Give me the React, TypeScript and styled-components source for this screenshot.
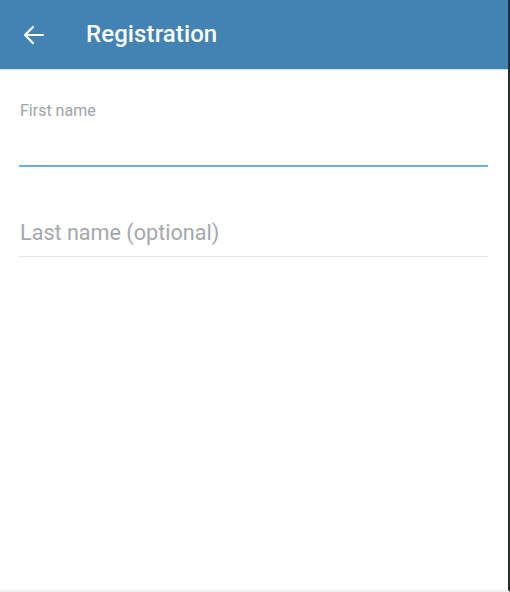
import { useState } from "react";
import styled, { createGlobalStyle } from "styled-components";

const GlobalStyle = createGlobalStyle`
  html, body {
    margin: 0;
    padding: 0;
    background: #ffffff;
    font-family: Roboto, "Noto Sans", Arial, sans-serif;
  }
`;

const Screen = styled.div`
  width: 508px;
  height: 590px;
  border-right: 2px solid #2b2b2b;
  border-bottom: 2px solid #f1f1f1;
  background: #ffffff;
  display: flex;
  flex-direction: column;
`;

const Header = styled.header`
  height: 69px;
  background: #4383b3;
  border-bottom: 1px solid #cfe3f3;
  display: flex;
  align-items: center;
  padding: 0 0 0 22px;
  gap: 40px;
  color: #ffffff;
`;

const BackButton = styled.button`
  border: 0;
  background: none;
  padding: 0;
  width: 24px;
  height: 24px;
  display: flex;
  align-items: center;
  justify-content: center;
  color: inherit;
  cursor: pointer;
`;

const Title = styled.h1`
  margin: 0 0 1px;
  font-size: 24px;
  font-weight: 500;
  letter-spacing: 0.1px;
`;

const Form = styled.form`
  display: flex;
  flex-direction: column;
  padding: 31px 20px 0 19px;
  gap: 38px;
`;

const Field = styled.label<{ $active?: boolean }>`
  display: flex;
  flex-direction: column;
  border-bottom: ${(p) => (p.$active ? "2px solid #62b1ec" : "1px solid #e3e4e6")};
`;

const Caption = styled.span`
  font-size: 16px;
  color: #9ea3a8;
  padding-left: 1px;
  height: 19px;
  line-height: 19px;
`;

const Input = styled.input<{ $size: number; $height: number }>`
  border: 0;
  outline: none;
  background: transparent;
  padding: 3px 0 0 1px;
  height: ${(p) => p.$height}px;
  box-sizing: border-box;
  font-family: inherit;
  font-size: ${(p) => p.$size}px;
  color: #333;

  &::placeholder {
    color: #a4a8ad;
  }
`;

export default function App() {
  const [first, setFirst] = useState("");
  const [last, setLast] = useState("");

  return (
    <>
      <GlobalStyle />
      <Screen>
        <Header>
          <BackButton type="button" aria-label="Back">
            <svg width="24" height="24" viewBox="0 0 24 24" fill="none">
              <path
                d="M21 12H3.5M11 4l-8 8 8 8"
                stroke="#fff"
                strokeWidth="2.2"
                strokeLinecap="round"
                strokeLinejoin="round"
              />
            </svg>
          </BackButton>
          <Title>Registration</Title>
        </Header>
        <Form onSubmit={(e) => e.preventDefault()}>
          <Field $active>
            <Caption>First name</Caption>
            <Input
              $size={20}
              $height={45}
              value={first}
              onChange={(e) => setFirst(e.target.value)}
            />
          </Field>
          <Field>
            <Input
              $size={21.6}
              $height={51}
              placeholder="Last name (optional)"
              value={last}
              onChange={(e) => setLast(e.target.value)}
            />
          </Field>
        </Form>
      </Screen>
    </>
  );
}
